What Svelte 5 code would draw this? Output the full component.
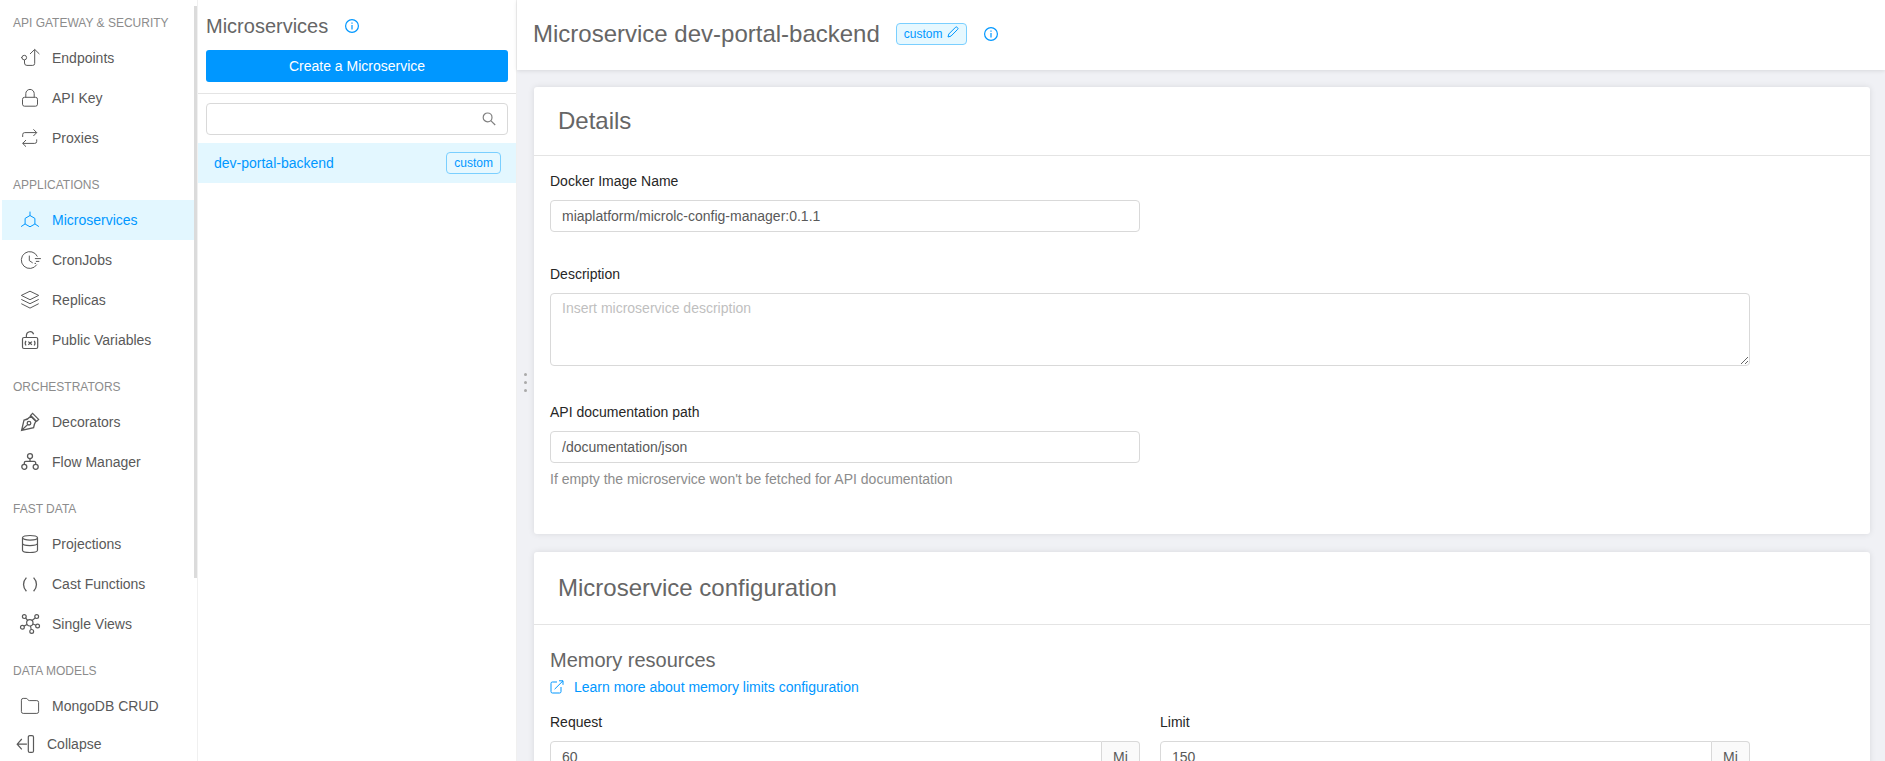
<script>
  const sections = [
    {
      title: 'API GATEWAY & SECURITY',
      items: [
        { label: 'Endpoints', icon: 'endpoints' },
        { label: 'API Key', icon: 'lock' },
        { label: 'Proxies', icon: 'proxies' }
      ]
    },
    {
      title: 'APPLICATIONS',
      items: [
        { label: 'Microservices', icon: 'microservices', active: true },
        { label: 'CronJobs', icon: 'cron' },
        { label: 'Replicas', icon: 'layers' },
        { label: 'Public Variables', icon: 'variables' }
      ]
    },
    {
      title: 'ORCHESTRATORS',
      items: [
        { label: 'Decorators', icon: 'pen' },
        { label: 'Flow Manager', icon: 'flow' }
      ]
    },
    {
      title: 'FAST DATA',
      items: [
        { label: 'Projections', icon: 'database' },
        { label: 'Cast Functions', icon: 'parens' },
        { label: 'Single Views', icon: 'network' }
      ]
    },
    {
      title: 'DATA MODELS',
      items: [{ label: 'MongoDB CRUD', icon: 'folder' }]
    }
  ];

  let image = $state('miaplatform/microlc-config-manager:0.1.1');
  let description = $state('');
  let docPath = $state('/documentation/json');
  let request = $state('60');
  let limit = $state('150');
  let query = $state('');
</script>

{#snippet navIcon(name)}
  <svg class="nav-icon" viewBox="0 0 20 20" aria-hidden="true">
    {#if name === 'endpoints'}
      <circle cx="4.3" cy="9.6" r="2.3" />
      <path d="M1 9.6h1M4.5 12v3a2.4 2.4 0 0 0 2.4 2.4h5.8a2 2 0 0 0 2-2V1.6M10 6l4.7-4.6L19.4 6" />
    {:else if name === 'lock'}
      <rect x="2.5" y="9.3" width="15" height="8.9" rx="2" />
      <path d="M5.8 9.3V5.6a4.2 4.2 0 0 1 8.4 0v3.7" />
    {:else if name === 'proxies'}
      <path d="M2.7 9V6.6a2 2 0 0 1 2-2h12M13.4 1.3l3.3 3.3-3.3 3.4M16.7 11.4v2a2 2 0 0 1-2 2h-12M6 12l-3.3 3.4L6 18.7" />
    {:else if name === 'microservices'}
      <path d="M10 5.5l4.9 2.9v5.6L10 16.8 5.1 14V8.4zM10 1.6v4M5.1 13.9l-4 2.7M14.9 13.9l4 2.7" />
    {:else if name === 'cron'}
      <path d="M17.4 6.6a8.4 8.4 0 1 0-.6 8M9.3 5.6v5l3.4 2.3M14.9 8.6h6M15.9 11.4h3.4M14.6 13.4h1.4" />
    {:else if name === 'layers'}
      <path d="M10 1.2l8.7 4.2-8.7 4.3-8.7-4.3zM1.3 9.4l8.7 4.3 8.7-4.3M1.3 13.7l8.7 4.4 8.7-4.4" />
    {:else if name === 'variables'}
      <g stroke-width="1.2">
        <rect x="2.5" y="7.5" width="15.2" height="11" rx="1.5" />
        <path d="M6.4 7.4V5.2a3.7 3.7 0 0 1 7.2-1M6 10.9c-1 1.4-1 3.2 0 4.6M14.2 10.9c1 1.4 1 3.2 0 4.6M8.3 11.6l3.6 3.2M11.9 11.6l-3.6 3.2" />
      </g>
    {:else if name === 'pen'}
      <g stroke-width="1.3">
        <path d="M1.6 18.3L4 8.2c2.6-.4 4.6-1.4 6.8-3.9l5 5c-1.4 2-1.8 3.8-2.2 6.4zM1.6 18.3l6-5.7" />
        <path d="M12.6 1.4l6 6-2 2-6-6z" />
        <circle cx="9" cy="11.2" r="1.8" />
      </g>
    {:else if name === 'flow'}
      <g stroke-width="1.3">
        <circle cx="10" cy="4.1" r="2.5" />
        <circle cx="4.3" cy="14.8" r="2.5" />
        <circle cx="15.7" cy="14.8" r="2.5" />
        <path d="M10 6.6v2.8M4.3 12.3v-1.4a1.5 1.5 0 0 1 1.5-1.5h8.4a1.5 1.5 0 0 1 1.5 1.5v1.4" />
      </g>
    {:else if name === 'database'}
      <g stroke-width="1.2">
        <ellipse cx="10" cy="3.8" rx="7.5" ry="2.3" />
        <path d="M2.5 3.8v12.4c0 1.3 3.4 2.3 7.5 2.3s7.5-1 7.5-2.3V3.8M2.5 9.3c0 1.3 3.4 2.3 7.5 2.3s7.5-1 7.5-2.3" />
      </g>
    {:else if name === 'parens'}
      <path stroke-width="1.3" d="M6.4 3.6c-3.8 4-3.8 9.6 0 13.6M13.6 3.6c3.8 4 3.8 9.6 0 13.6" />
    {:else if name === 'network'}
      <g stroke-width="1.2">
        <circle cx="9.8" cy="8.8" r="3.2" />
        <circle cx="4.3" cy="2.6" r="1.9" />
        <circle cx="16.7" cy="2.6" r="1.9" />
        <circle cx="2.4" cy="13.2" r="1.9" />
        <circle cx="17.6" cy="12" r="1.9" />
        <circle cx="11.7" cy="17.4" r="1.9" />
        <path d="M5.6 4l2 2.4M15.2 4L12 6.5M4 12.1l3-1.6M15.9 11.2l-3-1.2M11.2 15.5L10.5 12" />
      </g>
    {:else if name === 'folder'}
      <path d="M1.4 15.6V4.2a1.8 1.8 0 0 1 1.8-1.8h3.1c1.5 0 1.3 2.2 3 2.2h7.5a1.8 1.8 0 0 1 1.8 1.8v9.2a1.8 1.8 0 0 1-1.8 1.8H3.2a1.8 1.8 0 0 1-1.8-1.8z" />
    {:else if name === 'collapse'}
      <path stroke-width="1.2" d="M11.9 10.2H2.3M6.8 5l-4.6 5.2 4.6 5.2" />
      <rect stroke-width="1.2" x="13.3" y="1.6" width="5.2" height="16.8" rx="1.5" />
    {/if}
  </svg>
{/snippet}

{#snippet info()}
  <svg class="info-icon" viewBox="0 0 14 14" aria-hidden="true">
    <circle cx="7" cy="7" r="6.4" />
    <path d="M7 6v4.4M7 3.6v1.2" />
  </svg>
{/snippet}

<div class="app">
  <aside class="sidebar">
    <nav>
      {#each sections as section}
        <section class="group">
          <h2>{section.title}</h2>
          {#each section.items as item}
            <a class="nav-item" class:active={item.active} href="#{item.icon}">
              {@render navIcon(item.icon)}
              <span>{item.label}</span>
            </a>
          {/each}
        </section>
      {/each}
    </nav>
    <span class="thumb"></span>
    <button class="collapse" type="button">
      {@render navIcon('collapse')}
      <span>Collapse</span>
    </button>
  </aside>

  <section class="list">
    <header class="list-head">
      <div class="title-row">
        <h1>Microservices</h1>
        <button class="icon-btn" type="button" aria-label="Info">{@render info()}</button>
      </div>
      <button class="primary" type="button">Create a Microservice</button>
    </header>
    <div class="search">
      <input type="text" aria-label="Search" bind:value={query} />
      <svg viewBox="0 0 14 14" aria-hidden="true">
        <circle cx="5.6" cy="5.4" r="4.4" />
        <path d="M8.8 8.6l4.4 4.4" />
      </svg>
    </div>
    <a class="entry" href="#dev-portal-backend">
      <span>dev-portal-backend</span>
      <span class="tag">custom</span>
    </a>
  </section>

  <main>
    <header class="main-head">
      <h1>Microservice dev-portal-backend</h1>
      <button class="tag editable" type="button">
        custom
        <svg viewBox="0 0 12 12" aria-hidden="true">
          <path d="M1 11l.8-3L8.6 1.2a1 1 0 0 1 1.4 0l.7.7a1 1 0 0 1 0 1.4L4 10.1z" />
        </svg>
      </button>
      <button class="icon-btn" type="button" aria-label="Info">{@render info()}</button>
    </header>

    <div class="content">
      <div class="handle"><i></i><i></i><i></i></div>
      <div class="cards">
        <section class="card details">
          <h2>Details</h2>
          <div class="form">
            <div class="field half">
              <label for="image">Docker Image Name</label>
              <input id="image" type="text" bind:value={image} />
            </div>
            <div class="field">
              <label for="description">Description</label>
              <textarea id="description" placeholder="Insert microservice description" bind:value={description}></textarea>
            </div>
            <div class="field half">
              <label for="doc-path">API documentation path</label>
              <input id="doc-path" type="text" bind:value={docPath} />
              <p class="hint">If empty the microservice won't be fetched for API documentation</p>
            </div>
          </div>
        </section>

        <section class="card config">
          <h2>Microservice configuration</h2>
          <div class="form">
            <div class="intro">
              <h3>Memory resources</h3>
              <a class="more" href="#memory-limits">
                <svg viewBox="0 0 14 14" aria-hidden="true">
                  <path d="M7 2H2.4A1.4 1.4 0 0 0 1 3.4v8.2A1.4 1.4 0 0 0 2.4 13h7.2a1.4 1.4 0 0 0 1.4-1.4V7M4.6 9.2L13 .8M9 .8h4v4" />
                </svg>
                Learn more about memory limits configuration
              </a>
            </div>
            <div class="pair">
              <div class="field">
                <label for="request">Request</label>
                <div class="with-unit">
                  <input id="request" type="text" bind:value={request} />
                  <span>Mi</span>
                </div>
              </div>
              <div class="field">
                <label for="limit">Limit</label>
                <div class="with-unit">
                  <input id="limit" type="text" bind:value={limit} />
                  <span>Mi</span>
                </div>
              </div>
            </div>
          </div>
        </section>
      </div>
    </div>
  </main>
</div>

<style>
  :global(body) {
    margin: 0;
    font: 14px/22px 'Liberation Sans', Arial, sans-serif;
    color: #595959;
  }

  * {
    box-sizing: border-box;
  }

  h1,
  h2,
  h3,
  p {
    margin: 0;
    font-weight: 400;
  }

  a {
    text-decoration: none;
  }

  button,
  input,
  textarea {
    font: inherit;
    color: inherit;
  }

  svg {
    flex: none;
    fill: none;
    stroke: currentColor;
    stroke-width: 1;
  }

  .app {
    display: flex;
    height: 100vh;
    overflow: hidden;
    background: #fff;
  }

  /* Navigation */
  .sidebar {
    position: relative;
    display: flex;
    flex-direction: column;
    flex: none;
    width: 198px;
    border-right: 1px solid #f0f0f0;
  }

  nav {
    flex: 1;
    min-height: 0;
    overflow: hidden;
    padding: 0 3px 0 2px;
  }

  .group + .group {
    margin-top: 4px;
  }

  .group h2 {
    padding: 12px 11px 4px;
    font-size: 12px;
    line-height: 22px;
    color: #8c8c8c;
  }

  .nav-item {
    display: flex;
    align-items: center;
    gap: 12px;
    height: 40px;
    padding-left: 18px;
    color: #595959;
  }

  .nav-icon {
    width: 20px;
    height: 20px;
    overflow: visible;
  }

  .nav-item.active {
    background: #e3f7ff;
    color: #0097ff;
  }

  .thumb {
    position: absolute;
    top: 6px;
    right: 0;
    width: 3px;
    height: 75.2%;
    background: #dbdbdb;
  }

  .collapse {
    display: flex;
    align-items: center;
    gap: 12px;
    height: 35px;
    padding: 0 15px;
    border: 0;
    background: #fff;
  }

  /* Service list */
  .list {
    flex: none;
    width: 319px;
    border-right: 1px solid #f0f0f0;
  }

  .list-head {
    padding: 10px 8px 11px;
    border-bottom: 1px solid #e4e4e4;
  }

  .title-row {
    display: flex;
    align-items: center;
    gap: 17px;
    margin-bottom: 8px;
  }

  .title-row h1 {
    font-size: 20px;
    line-height: 32px;
    color: #666;
  }

  .icon-btn {
    display: flex;
    padding: 0;
    border: 0;
    background: none;
    color: #0097ff;
  }

  .info-icon {
    width: 14px;
    height: 14px;
    stroke-width: 1.2;
  }

  .primary {
    display: block;
    width: 100%;
    height: 32px;
    border: 0;
    border-radius: 3px;
    background: #0097ff;
    color: #fff;
  }

  .search {
    position: relative;
    padding: 9px 8px 8px;
  }

  .search svg {
    position: absolute;
    top: 18px;
    right: 20px;
    width: 14px;
    height: 14px;
    color: #808080;
    stroke-width: 1.2;
  }

  input,
  textarea {
    display: block;
    width: 100%;
    height: 32px;
    padding: 4px 11px;
    border: 1px solid #d9d9d9;
    border-radius: 4px;
    background: #fff;
    outline: 0;
  }

  .entry {
    display: flex;
    align-items: center;
    justify-content: space-between;
    height: 40px;
    padding: 0 15px 0 16px;
    background: #e3f7ff;
    color: #0097ff;
  }

  .tag {
    padding: 0 7px;
    border: 1px solid #7acfff;
    border-radius: 4px;
    background: #e6f8ff;
    color: #0097ff;
    font-size: 12px;
    line-height: 20px;
  }

  /* Main area */
  main {
    display: flex;
    flex: 1;
    flex-direction: column;
    min-width: 0;
    background: #f0f1f5;
  }

  .main-head {
    position: relative;
    display: flex;
    flex: none;
    align-items: center;
    height: 70px;
    padding: 0 16px 2px;
    background: #fff;
    box-shadow: 0 1px 4px rgba(0, 0, 0, 0.1);
  }

  .main-head h1 {
    font-size: 24px;
    line-height: 32px;
    color: #666;
  }

  .editable {
    display: flex;
    gap: 4px;
    margin: 0 17px 0 16px;
  }

  .editable svg {
    width: 12px;
    height: 12px;
    margin-top: 2px;
  }

  .content {
    display: flex;
    flex: 1;
    min-height: 0;
    overflow: hidden;
  }

  .handle {
    display: flex;
    flex: none;
    flex-direction: column;
    align-items: center;
    justify-content: center;
    gap: 5px;
    width: 17px;
    padding: 0 1px 66px 0;
  }

  .handle i {
    width: 3px;
    height: 3px;
    border-radius: 50%;
    background: #aaa;
  }

  .cards {
    flex: 1;
    min-width: 0;
    padding: 17px 15px 0 0;
  }

  .card {
    margin-bottom: 18px;
    border-radius: 3px;
    background: #fff;
    box-shadow: 0 0 6px rgba(0, 0, 0, 0.1);
  }

  .card h2 {
    padding: 18px 24px;
    border-bottom: 1px solid #e4e4e4;
    font-size: 24px;
    line-height: 32px;
    color: #666;
  }

  .config h2 {
    padding: 20px 24px;
  }

  .form {
    display: flex;
    flex-direction: column;
    gap: 31px;
    max-width: 1232px;
    padding: 14px 16px 44px;
  }

  .field label {
    display: block;
    margin-bottom: 8px;
    color: #262626;
  }

  .half {
    width: calc(50% - 10px);
  }

  textarea {
    height: 73px;
    margin-bottom: 4px;
    padding-top: 3px;
    resize: vertical;
  }

  textarea::placeholder {
    color: #bfbfbf;
  }

  .hint {
    padding-top: 5px;
    color: #8c8c8c;
  }

  .config .form {
    gap: 13px;
    padding-top: 20px;
  }

  .intro h3 {
    font-size: 20px;
    line-height: 31px;
    color: #666;
  }

  .more {
    display: flex;
    align-items: center;
    gap: 10px;
    color: #0097ff;
  }

  .more svg {
    width: 14px;
    height: 14px;
  }

  .pair {
    display: grid;
    grid-template-columns: 1fr 1fr;
    gap: 20px;
  }

  .with-unit {
    display: flex;
  }

  .with-unit input {
    flex: 1;
    min-width: 0;
    border-radius: 4px 0 0 4px;
  }

  .with-unit span {
    flex: none;
    width: 38px;
    border: 1px solid #d9d9d9;
    border-left: 0;
    border-radius: 0 4px 4px 0;
    background: #fafafa;
    line-height: 30px;
    text-align: center;
  }
</style>
